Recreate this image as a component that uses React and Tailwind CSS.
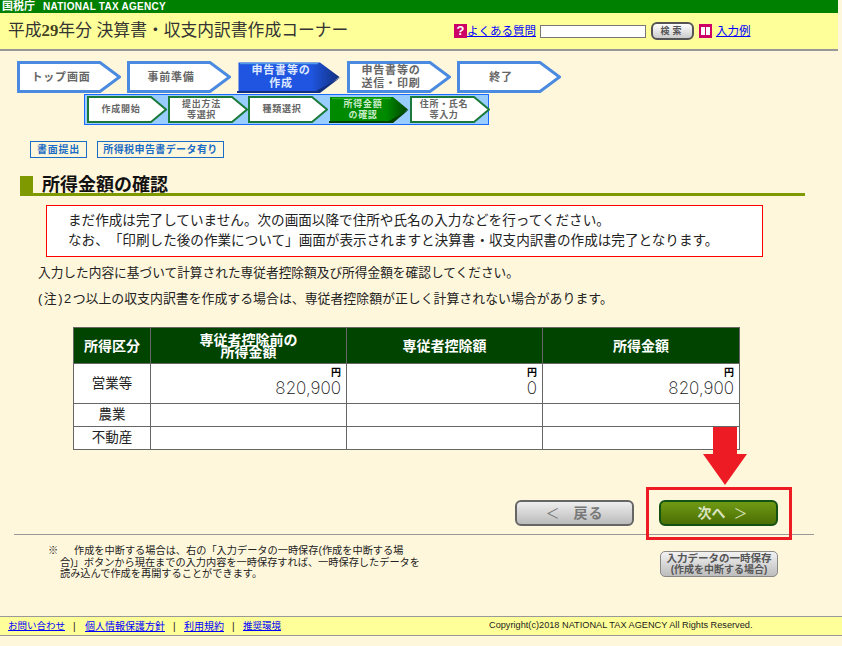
const STEPS = [
  { label: ['トップ画面'] },
  { label: ['事前準備'] },
  { label: ['申告書等の', '作成'], active: true },
  { label: ['申告書等の', '送信・印刷'] },
  { label: ['終了'] },
]

const SUB_STEPS = [
  { label: ['作成開始'], width: 'w-[80px]' },
  { label: ['提出方法', '等選択'], width: 'w-[79px]' },
  { label: ['種類選択'], width: 'w-[80px]' },
  { label: ['所得金額', 'の確認'], width: 'w-[80px]', active: true },
  { label: ['住所・氏名', '等入力'], width: 'w-[80px]' },
]

const ROWS = [
  { name: '営業等', values: ['820,900', '0', '820,900'], tall: true },
  { name: '農業', values: ['', '', ''] },
  { name: '不動産', values: ['', '', ''] },
]

// 工程の矢印: 上段は104x32、下段は80x27
function StepShape({ w, h, notch, fill, stroke, sw, dark, light, id }) {
  const i = sw / 2
  const pts = `${i},${i} ${w - notch},${i} ${w - i},${h / 2} ${w - notch},${h - i} ${i},${h - i}`
  return (
    <svg width={w} height={h} viewBox={`0 0 ${w} ${h}`} className="absolute inset-0">
      {dark && (
        <defs>
          <linearGradient id={id} x1="0" y1="0" x2="1" y2="0">
            <stop offset="0" stopColor={fill} />
            <stop offset="0.72" stopColor={fill} />
            <stop offset="1" stopColor={dark} />
          </linearGradient>
        </defs>
      )}
      <polygon points={pts} fill={dark ? `url(#${id})` : fill} stroke={dark ? 'none' : stroke} strokeWidth={sw} />
      {dark && <line x1="3" y1="2.5" x2={w - notch - 2} y2="2.5" stroke={light} strokeWidth="1.5" />}
      {dark && <polygon points={`${w - notch},${h} ${w},${h / 2} ${w - notch - 4},${h - 2} 0,${h - 2} 0,${h}`} fill={dark} />}
    </svg>
  )
}

function Step({ step, index }) {
  return (
    <div className="relative w-[104px] h-[32px] shrink-0">
      <StepShape
        w={104} h={32} notch={21} sw={3} id={`main${index}`}
        fill={step.active ? '#1f55e0' : '#ffffff'}
        stroke="#4a8ae0"
        dark={step.active ? '#12307f' : null}
        light="#4f9ae8"
      />
      <div className={`relative pr-[16px] h-full flex flex-col items-center justify-center text-[11px] leading-[13px] font-bold tracking-[0.8px] ${step.active ? 'text-[#dfe9ff]' : 'text-[#666666]'}`}>
        {step.label.map(l => <span key={l}>{l}</span>)}
      </div>
    </div>
  )
}

function SubStep({ step, index }) {
  return (
    <div className={`relative h-[27px] shrink-0 ${step.width}`}>
      <StepShape
        w={80} h={27} notch={16} sw={2} id={`sub${index}`}
        fill={step.active ? '#008a00' : '#ffffff'}
        stroke="#1a7a3a"
        dark={step.active ? '#004400' : null}
        light="#22b022"
      />
      <div className={`relative pr-[12px] h-full flex flex-col items-center justify-center text-[9px] leading-[10.5px] font-bold tracking-[0.7px] ${step.active ? 'text-[#c8ecc8]' : 'text-[#666666]'}`}>
        {step.label.map(l => <span key={l}>{l}</span>)}
      </div>
    </div>
  )
}

export default function App() {
  return (
    <div className="relative flex flex-col w-[842px] h-[646px] overflow-hidden bg-[#fff7dc] text-[#222222] [text-spacing-trim:space-all] font-['Liberation_Sans','Noto_Sans_CJK_JP',sans-serif]">

      {/* Header */}
      <div className="w-[838px]">
        <div className="h-[13px] bg-[#008000] flex items-center pl-[2px] text-white font-bold">
          <span className="text-[11px] leading-[13px] w-[41px]">国税庁</span>
          <span className="text-[10px] leading-[13px] tracking-[0.26px]">NATIONAL TAX AGENCY</span>
        </div>
        <div className="h-[38px] bg-[#ffff99] border-b-2 border-[#999999] flex items-center pl-[8px]">
          <span className="text-[16.8px] w-[446px] text-[#333333] mb-[1px]">
            平成<b className="font-['Liberation_Serif'] text-[#444422]">29</b>年分 決算書・収支内訳書作成コーナー
          </span>
          <span className="w-[13px] h-[14px] bg-[#cc0066] text-white text-[13px] leading-[14px] font-bold text-center">?</span>
          <a href="#" className="text-[#0000ff] underline text-[11.5px] leading-[14px] w-[73px]">よくある質問</a>
          <input className="w-[106px] h-[13px] bg-white border border-[#777777] outline-none" />
          <button className="ml-[5px] w-[43px] h-[18px] rounded-[6px] border-2 border-[#555555] bg-gradient-to-b from-white to-[#cccccc] text-[9px] leading-[14px] font-bold text-[#555555] tracking-[3px]">検索</button>
          <svg width="13" height="14" viewBox="0 0 13 14" className="ml-[5px]">
            <rect width="13" height="14" fill="#cc0066" />
            <rect x="2" y="3" width="4" height="8" fill="#ffffff" />
            <rect x="7" y="3" width="4" height="8" fill="#ffffff" />
          </svg>
          <a href="#" className="ml-[4px] text-[#0000ff] underline text-[11.5px] leading-[14px]">入力例</a>
        </div>
      </div>

      {/* Progress */}
      <div className="flex gap-[6px] ml-[17px] mt-[10px]">
        {STEPS.map((s, i) => <Step key={i} step={s} index={i} />)}
      </div>
      <div className="flex items-center w-[405px] h-[31px] ml-[84px] mt-[1px] pl-[2px] gap-[1px] bg-[#99ccff] border border-[#1a6aff]">
        {SUB_STEPS.map((s, i) => <SubStep key={i} step={s} index={i} />)}
      </div>

      {/* Status buttons */}
      <div className="flex gap-[10px] ml-[30px] mt-[16px] text-[10px] font-bold text-[#1a6cc4]">
        <span className="w-[57px] h-[17px] border border-[#1a6cc4] text-center leading-[15px] tracking-[0.8px]">書面提出</span>
        <span className="w-[127px] h-[17px] border border-[#1a6cc4] text-center leading-[15px] tracking-[0.4px]">所得税申告書データ有り</span>
      </div>

      {/* Title */}
      <div className="flex ml-[20px] mt-[18px] w-[785px] h-[20px] border-b-[3px] border-[#7f9900]">
        <div className="w-[13px] h-[20px] bg-[#7f9900] shrink-0" />
        <h1 className="ml-[9px] text-[18px] leading-[18px] font-bold text-[#111111] whitespace-nowrap">所得金額の確認</h1>
      </div>

      {/* Notice */}
      <div className="ml-[46px] mt-[9px] w-[717px] h-[52px] bg-white border border-[#ff0000] pl-[21px] pt-[5px] text-[13.6px] leading-[20px] whitespace-nowrap">
        <p>まだ作成は完了していません。次の画面以降で住所や氏名の入力などを行ってください。</p>
        <p>なお、「印刷した後の作業について」画面が表示されますと決算書・収支内訳書の作成は完了となります。</p>
      </div>

      <p className="ml-[38px] mt-[6px] text-[12.7px] leading-[20px]">入力した内容に基づいて計算された専従者控除額及び所得金額を確認してください。</p>
      <p className="ml-[38px] mt-[6px] text-[12.9px] leading-[20px]"><span className="tracking-[1.5px]">(注)2</span>つ以上の収支内訳書を作成する場合は、専従者控除額が正しく計算されない場合があります。</p>

      {/* Table */}
      <table className="ml-[73px] mt-[18px] w-[666px] table-fixed border-collapse border border-[#666666]">
        <colgroup>
          <col className="w-[77px]" />
          <col className="w-[196px]" />
          <col className="w-[196px]" />
          <col className="w-[197px]" />
        </colgroup>
        <thead>
          <tr className="h-[36px] bg-[#004400] text-white text-[14px] leading-[12px] font-bold">
            <th className="border border-[#666666]">所得区分</th>
            <th className="border border-[#666666]">専従者控除前の<br />所得金額</th>
            <th className="border border-[#666666]">専従者控除額</th>
            <th className="border border-[#666666]">所得金額</th>
          </tr>
        </thead>
        <tbody className="bg-white">
          {ROWS.map(r => (
            <tr key={r.name} className={r.tall ? 'h-[40px]' : 'h-[23px]'}>
              <td className="border border-[#666666] text-center text-[13.5px] leading-[16px]">{r.name}</td>
              {r.values.map((v, i) => (
                <td key={i} className="border border-[#666666] text-right pr-[5px] align-top">
                  {v && (
                    <div className="flex flex-col items-end">
                      <span className="text-[10px] leading-[10px] mt-[4px] font-bold text-black">円</span>
                      <span className="font-['Inter'] font-extralight text-[17px] leading-[20px] text-[#111111]">{v}</span>
                    </div>
                  )}
                </td>
              ))}
            </tr>
          ))}
        </tbody>
      </table>

      {/* Nav buttons */}
      <div className="flex gap-[25px] ml-[515px] mt-[50px]">
        <button className="flex items-center justify-center gap-[14px] w-[119px] h-[26px] rounded-[6px] border-2 border-[#666666] bg-gradient-to-b from-[#eeeeee] to-[#bbbbbb] text-[14px] leading-[20px] font-bold text-[#777777]">
          <span className="font-normal">＜</span>
          <span className="tracking-[1px]">戻る</span>
        </button>
        <button className="flex items-center justify-center gap-[8px] pl-[8px] w-[119px] h-[26px] rounded-[6px] border-2 border-[#145214] bg-gradient-to-b from-[#6f9a14] to-[#4c6f04] text-[14px] leading-[20px] font-bold text-[#dbe4c0]">
          <span>次へ</span>
          <span className="font-normal">＞</span>
        </button>
      </div>

      <div className="ml-[14px] mt-[8px] w-[800px] h-[1px] bg-[#999999]" />

      {/* Save note */}
      <div className="flex items-start mt-[10px]">
        <div className="ml-[48px] w-[612px] text-[10.2px] leading-[11.5px] text-[#222222]">
          <p className="whitespace-nowrap"><span className="inline-block w-[26px]">※</span>作成を中断する場合は、右の「入力データの一時保存(作成を中断する場</p>
          <p className="pl-[12px] whitespace-nowrap">合)」ボタンから現在までの入力内容を一時保存すれば、一時保存したデータを</p>
          <p className="pl-[12px] whitespace-nowrap">読み込んで作成を再開することができます。</p>
        </div>
        <button className="w-[118px] h-[26px] mt-[6px] rounded-[5px] border border-[#888888] bg-gradient-to-b from-[#f2f2f2] to-[#bdbdbd] text-[#555555] font-bold whitespace-nowrap flex flex-col items-center justify-center">
          <span className="text-[10.5px] leading-[12px]">入力データの一時保存</span>
          <span className="text-[10px] leading-[12px]">(作成を中断する場合)</span>
        </button>
      </div>

      {/* Footer */}
      <div className="mt-auto mb-[10px] h-[20px] bg-[#ffff99] border-y border-[#999999] flex items-center pl-[8px] text-[10px]">
        <a href="#" className="text-[#0000ff] underline w-[65px] text-[9.5px]">お問い合わせ</a>
        <span className="w-[12px]">|</span>
        <a href="#" className="text-[#0000ff] underline w-[88px]">個人情報保護方針</a>
        <span className="w-[11px]">|</span>
        <a href="#" className="text-[#0000ff] underline w-[48px]">利用規約</a>
        <span className="w-[11px]">|</span>
        <a href="#" className="text-[#0000ff] underline w-[246px] text-[9.5px]">推奨環境</a>
        <span className="text-[9.2px] whitespace-nowrap">Copyright(c)2018 NATIONAL TAX AGENCY All Rights Reserved.</span>
      </div>

      {/* Annotation over the page */}
      <svg width="44" height="58" viewBox="0 0 44 58" className="absolute left-[703px] top-[427px]">
        <polygon points="10,0 34,0 34,27 44,27 22,58 0,27 10,27" fill="#ed1c24" />
      </svg>
      <div className="absolute left-[646px] top-[487px] w-[146px] h-[53px] border-[3px] border-[#ed1c24]" />
    </div>
  )
}
